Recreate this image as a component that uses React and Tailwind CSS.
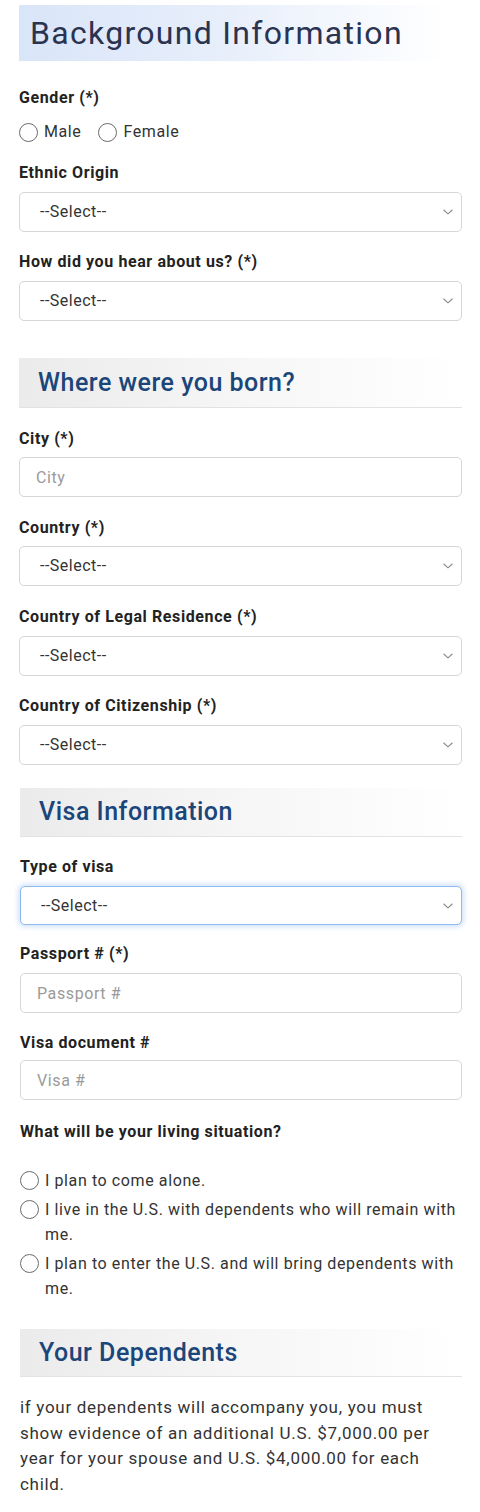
import React from "react";

function Chevron() {
  return (
    <svg className="pointer-events-none absolute right-[8px] top-1/2 -translate-y-1/2" width="12" height="8" viewBox="0 0 12 8" fill="none">
      <path d="M1.8 2 L6 5.8 L10.2 2" stroke="#8a8a8a" strokeWidth="1.1" strokeLinecap="round" strokeLinejoin="round" />
    </svg>
  );
}

function Label({ children, className = "" }) {
  return (
    <div className={"h-[20px] text-[16px] leading-[20px] tracking-[0.6px] font-bold text-[#222222] " + className}>{children}</div>
  );
}

function Select({ focus = false, className = "" }) {
  return (
    <div className={"relative " + className}>
      <select
        defaultValue=""
        className={
          focus
            ? "h-[39px] w-full appearance-none rounded-[5px] border border-[#8db8f0] bg-white pl-[20px] text-[16px] tracking-[0.5px] text-[#333333] shadow-[0_0_5px_2px_rgba(80,140,230,0.25)] outline-none font-['Roboto']"
            : "h-[40px] w-full appearance-none rounded-[5px] border border-[#d6d6d6] bg-white pl-[20px] text-[16px] tracking-[0.5px] text-[#333333] outline-none font-['Roboto']"
        }
      >
        <option value="">--Select--</option>
      </select>
      <Chevron />
    </div>
  );
}

function Input({ placeholder, className = "" }) {
  return (
    <input
      placeholder={placeholder}
      className={
        "block h-[40px] w-full rounded-[5px] border border-[#d6d6d6] bg-white pl-[16px] text-[16px] tracking-[0.6px] text-[#333333] placeholder:text-[#9a9a9a] outline-none font-['Roboto'] " +
        className
      }
    />
  );
}

function Radio() {
  return <span className="inline-block h-[19px] w-[19px] shrink-0 rounded-full border-[1.5px] border-[#6b6b6b] bg-white" />;
}

function Banner({ children, className = "" }) {
  return (
    <div className={"flex items-center border-b border-[#e2e2e2] bg-linear-to-r from-[#ebebeb] via-[#f6f6f6] to-white pl-[19px] " + className}>
      <h2 className="text-[25px] tracking-[0.5px] font-medium text-[#1b4679]">{children}</h2>
    </div>
  );
}

function RadioItem({ children }) {
  return (
    <div className="flex items-start gap-[6px]">
      <div className="flex h-[25px] items-center">
        <Radio />
      </div>
      <span className="text-[16px] leading-[25px] tracking-[0.6px] text-[#333333]">{children}</span>
    </div>
  );
}

export default function App() {
  return (
    <div className="w-[480px] bg-white pl-[19px] pr-[18px] pb-[16px] pt-[5px] font-['Roboto',sans-serif]">
      <div className="flex h-[56px] w-[428px] items-center bg-linear-to-r from-[#d9e5f8] via-[#e8effb] to-white pl-[11px]">
        <h1 className="text-[32px] tracking-[1.3px] font-normal text-[#2a3350]">Background Information</h1>
      </div>

      <Label className="mt-[27px]">Gender (*)</Label>
      <div className="mt-[13px] flex h-[22px] items-center">
        <div className="flex items-center gap-[6px]">
          <Radio />
          <span className="text-[16px] tracking-[0.6px] text-[#333333]">Male</span>
        </div>
        <div className="ml-[17px] flex items-center gap-[6px]">
          <Radio />
          <span className="text-[16px] tracking-[0.6px] text-[#333333]">Female</span>
        </div>
      </div>

      <Label className="mt-[20px]">Ethnic Origin</Label>
      <Select className="mt-[9px]" />

      <Label className="mt-[20px]">How did you hear about us? (*)</Label>
      <Select className="mt-[9px]" />

      <Banner className="mt-[37px] h-[50px]">Where were you born?</Banner>

      <Label className="mt-[21px]">City (*)</Label>
      <Input placeholder="City" className="mt-[8px]" />

      <Label className="mt-[21px]">Country (*)</Label>
      <Select className="mt-[8px]" />

      <Label className="mt-[21px]">Country of Legal Residence (*)</Label>
      <Select className="mt-[9px]" />

      <Label className="mt-[20px]">Country of Citizenship (*)</Label>
      <Select className="mt-[9px]" />

      <div className="pl-[1px]">
        <Banner className="mt-[23px] h-[49px]">Visa Information</Banner>

        <Label className="mt-[20px]">Type of visa</Label>
        <Select focus className="mt-[9px]" />

        <Label className="mt-[19px]">Passport # (*)</Label>
        <Input placeholder="Passport #" className="mt-[9px]" />

        <Label className="mt-[20px]">Visa document #</Label>
        <Input placeholder="Visa #" className="mt-[7px]" />

        <Label className="mt-[22px]">What will be your living situation?</Label>

        <div className="mt-[26px] flex flex-col gap-[4px]">
          <RadioItem>I plan to come alone.</RadioItem>
          <RadioItem>I live in the U.S. with dependents who will remain with me.</RadioItem>
          <RadioItem>I plan to enter the U.S. and will bring dependents with me.</RadioItem>
        </div>

        <Banner className="mt-[28px] h-[48px]">Your Dependents</Banner>

        <p className="mt-[18px] text-[17px] leading-[25.5px] tracking-[0.7px] text-[#333333]">
          if your dependents will accompany you, you must show evidence of an additional U.S. $7,000.00 per year for your spouse and U.S. $4,000.00 for each child.
        </p>
      </div>
    </div>
  );
}
